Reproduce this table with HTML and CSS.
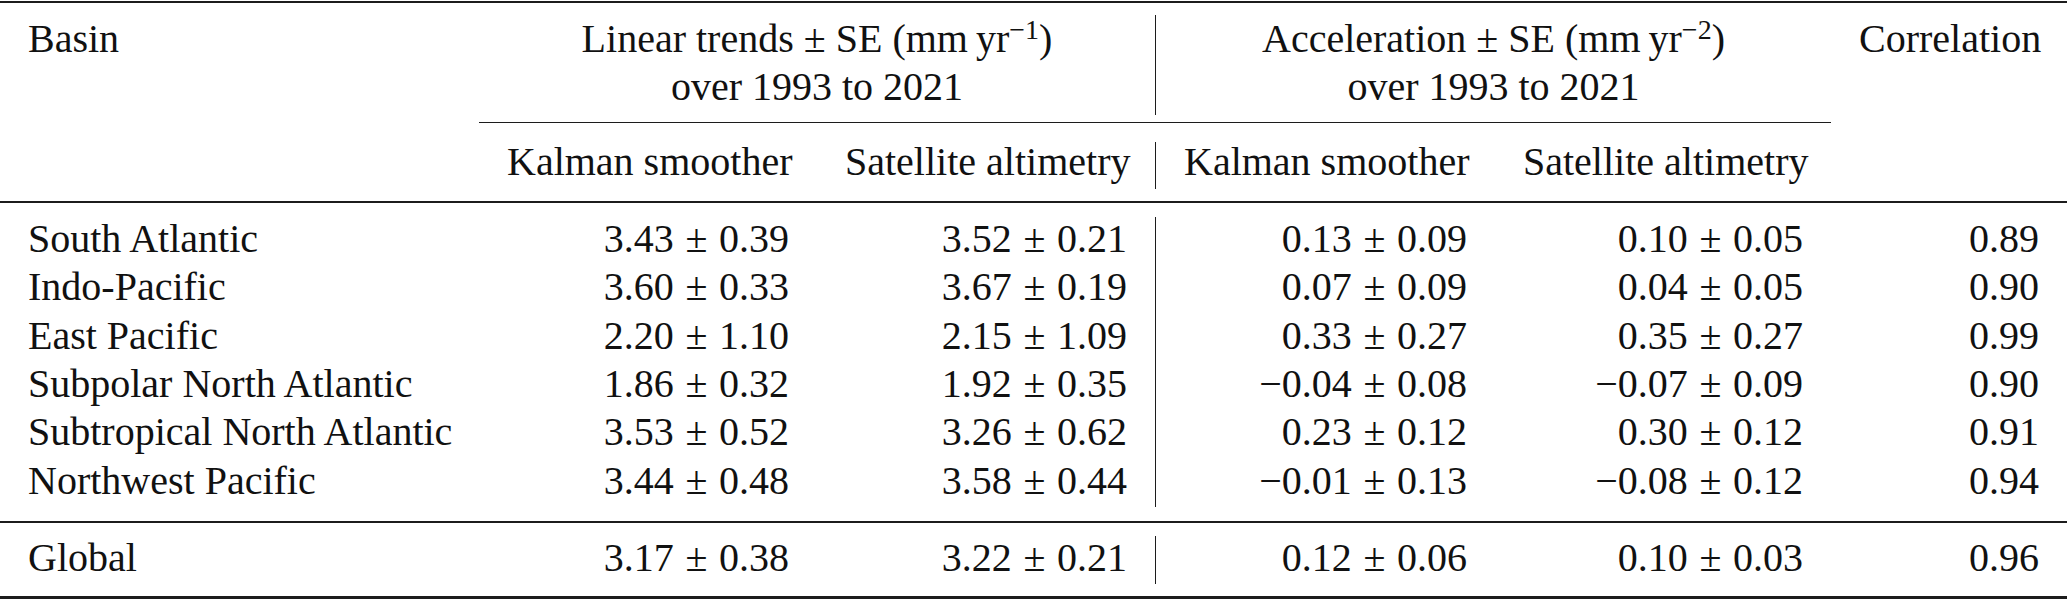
FILE: index.html
```html
<!DOCTYPE html>
<html lang="en">
<head>
<meta charset="utf-8">
<title>Sea level trends by basin</title>
<link rel="stylesheet" href="styles.css">
</head>
<body>
<table class="data">
  <colgroup>
    <col class="c-basin">
    <col class="c-n1">
    <col class="c-n2">
    <col class="c-n3">
    <col class="c-n4">
    <col class="c-corr">
  </colgroup>
  <thead>
    <tr class="rule-row"><td colspan="6"><div class="rule rule-top"></div></td></tr>
    <tr class="head1">
      <th class="left">Basin</th>
      <th colspan="2" class="center">Linear trends <span class="pm">±</span> SE (mm&thinsp;yr<sup class="exp">−1</sup>)<br>over 1993 to 2021</th>
      <th colspan="2" class="center vsep">Acceleration <span class="pm">±</span> SE (mm&thinsp;yr<sup class="exp">−2</sup>)<br>over 1993 to 2021</th>
      <th class="center">Correlation</th>
    </tr>
    <tr class="rule-row"><td></td><td colspan="4"><div class="rule rule-cmid"></div></td><td></td></tr>
    <tr class="head2">
      <th></th>
      <th>Kalman smoother</th>
      <th>Satellite altimetry</th>
      <th class="vsep">Kalman smoother</th>
      <th>Satellite altimetry</th>
      <th></th>
    </tr>
    <tr class="rule-row"><td colspan="6"><div class="rule rule-mid rule-mid-a"></div></td></tr>
  </thead>
  <tbody>
    <tr class="row">
      <td class="left">South Atlantic</td>
      <td>3.43<span class="pm">±</span>0.39</td>
      <td>3.52<span class="pm">±</span>0.21</td>
      <td class="vsep">0.13<span class="pm">±</span>0.09</td>
      <td>0.10<span class="pm">±</span>0.05</td>
      <td>0.89</td>
    </tr>
    <tr class="row">
      <td class="left">Indo-Pacific</td>
      <td>3.60<span class="pm">±</span>0.33</td>
      <td>3.67<span class="pm">±</span>0.19</td>
      <td class="vsep">0.07<span class="pm">±</span>0.09</td>
      <td>0.04<span class="pm">±</span>0.05</td>
      <td>0.90</td>
    </tr>
    <tr class="row">
      <td class="left">East Pacific</td>
      <td>2.20<span class="pm">±</span>1.10</td>
      <td>2.15<span class="pm">±</span>1.09</td>
      <td class="vsep">0.33<span class="pm">±</span>0.27</td>
      <td>0.35<span class="pm">±</span>0.27</td>
      <td>0.99</td>
    </tr>
    <tr class="row">
      <td class="left">Subpolar North Atlantic</td>
      <td>1.86<span class="pm">±</span>0.32</td>
      <td>1.92<span class="pm">±</span>0.35</td>
      <td class="vsep">−0.04<span class="pm">±</span>0.08</td>
      <td>−0.07<span class="pm">±</span>0.09</td>
      <td>0.90</td>
    </tr>
    <tr class="row">
      <td class="left">Subtropical North Atlantic</td>
      <td>3.53<span class="pm">±</span>0.52</td>
      <td>3.26<span class="pm">±</span>0.62</td>
      <td class="vsep">0.23<span class="pm">±</span>0.12</td>
      <td>0.30<span class="pm">±</span>0.12</td>
      <td>0.91</td>
    </tr>
    <tr class="row">
      <td class="left">Northwest Pacific</td>
      <td>3.44<span class="pm">±</span>0.48</td>
      <td>3.58<span class="pm">±</span>0.44</td>
      <td class="vsep">−0.01<span class="pm">±</span>0.13</td>
      <td>−0.08<span class="pm">±</span>0.12</td>
      <td>0.94</td>
    </tr>
    <tr class="rule-row"><td colspan="6"><div class="rule rule-mid rule-mid-b"></div></td></tr>
    <tr class="row">
      <td class="left">Global</td>
      <td>3.17<span class="pm">±</span>0.38</td>
      <td>3.22<span class="pm">±</span>0.21</td>
      <td class="vsep">0.12<span class="pm">±</span>0.06</td>
      <td>0.10<span class="pm">±</span>0.03</td>
      <td>0.96</td>
    </tr>
    <tr class="rule-row"><td colspan="6"><div class="rule rule-bottom"></div></td></tr>
  </tbody>
</table>
</body>
</html>
```

FILE: styles.css
```css
html, body {
  margin: 0;
  padding: 0;
  background: #ffffff;
}

.data {
  border-collapse: separate;
  border-spacing: 0;
  table-layout: fixed;
  width: 2067px;
  font-family: "Liberation Serif", "Times New Roman", serif;
  font-size: 40px;
  color: #111111;
}

.c-basin { width: 479px; }
.c-n1 { width: 338px; }
.c-n2 { width: 338px; }
.c-n3 { width: 340px; }
.c-n4 { width: 336px; }
.c-corr { width: 236px; }

.data th,
.data td {
  box-sizing: border-box;
  padding: 0 28px;
  font-weight: normal;
  white-space: nowrap;
}

.data .rule-row td {
  padding: 0;
  line-height: 0;
  font-size: 0;
}

.rule {
  background: #1c1c1c;
}

.rule-top {
  height: 2px;
  margin: 1px 0 12px;
}

.rule-cmid {
  height: 1px;
  margin: 7px 0 19px;
}

.rule-mid {
  height: 2px;
}

.rule-mid-a {
  margin: 12px 0 14px;
}

.rule-mid-b {
  margin: 14px 0 13px;
}

.rule-bottom {
  height: 3px;
  margin: 12px 0 0;
}

.vsep {
  border-left: 1px solid #1c1c1c;
}

.head1 th {
  line-height: 48px;
  padding-bottom: 4px;
  vertical-align: top;
}

.head2 th {
  line-height: 39px;
  padding-bottom: 8px;
  text-align: center;
}

.left { text-align: left; }
.center { text-align: center; }

.exp {
  font-size: 28px;
  line-height: 0;
  vertical-align: 13px;
}

.row td {
  line-height: 43px;
  padding-bottom: 5.33px;
  text-align: right;
}

.row td.left {
  text-align: left;
}

.pm {
  margin: 0 0.29em;
}

.head1 .pm {
  margin: 0;
}
```
